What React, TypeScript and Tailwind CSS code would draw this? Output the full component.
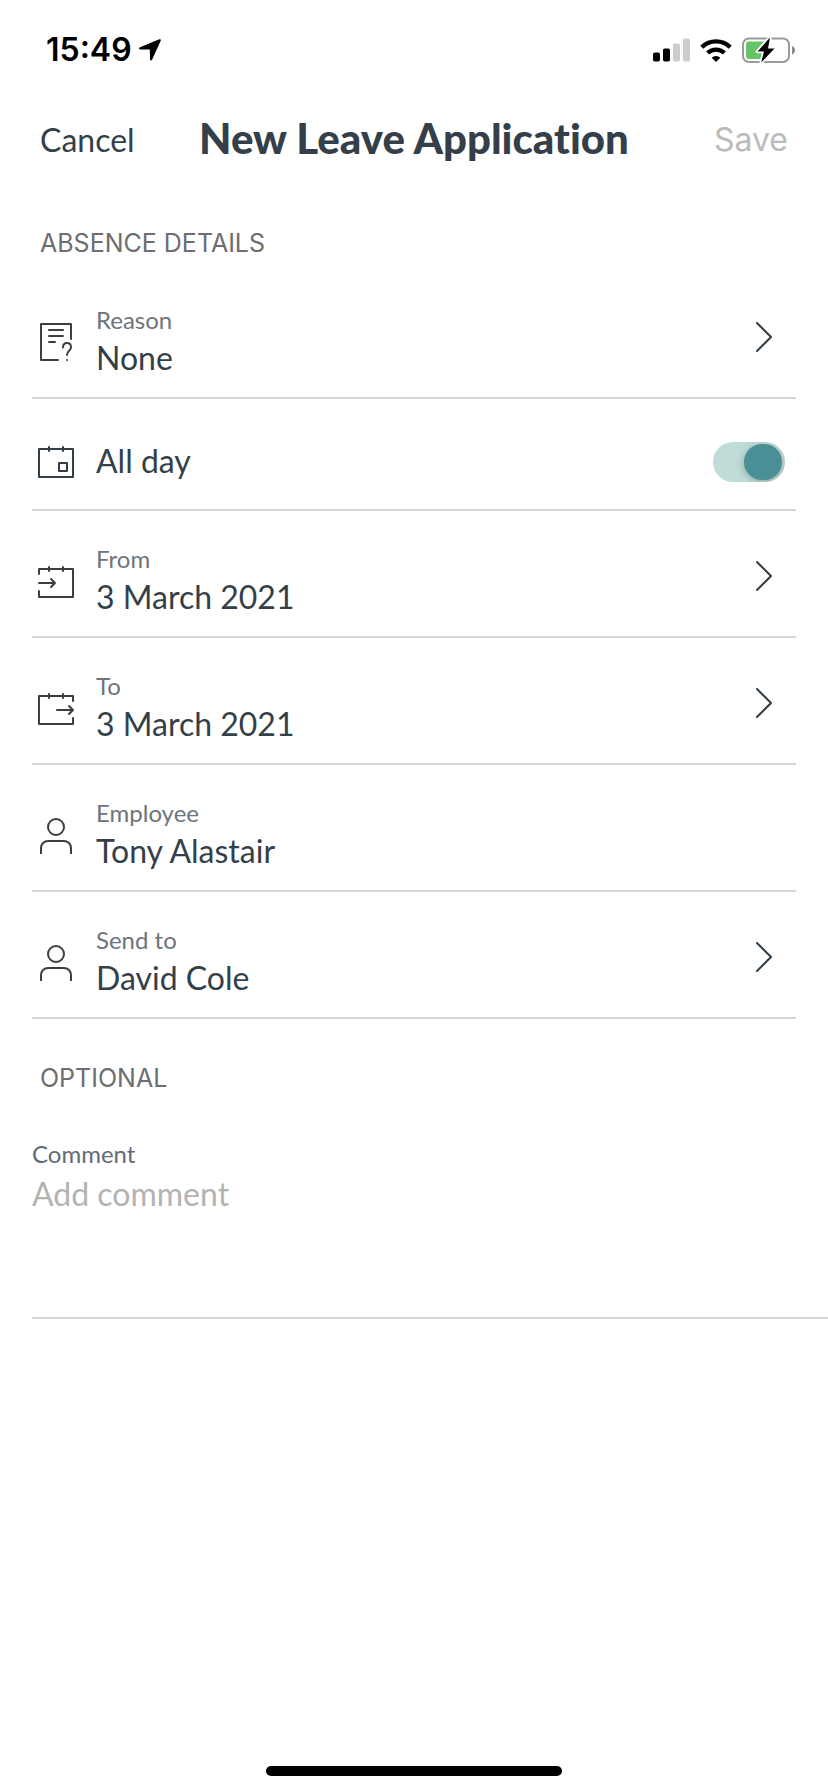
import { useState } from "react";
import type { ReactNode } from "react";

const iconProps = {
  viewBox: "0 0 48 48",
  fill: "none",
  stroke: "currentColor",
  strokeWidth: 2,
  strokeLinecap: "round" as const,
  strokeLinejoin: "round" as const,
  "aria-hidden": true,
};

function ReasonIcon() {
  return (
    <svg {...iconProps} className="size-12 shrink-0 text-[#3f3e3a]">
      <path d="M39 20V5H9v36h17M17 11h14M17 17h14M17 23h6" />
      <path d="M31 28.500c0-3 1.700-4.500 4-4.500s4 1.600 4 4.200c0 3.600-4 3.600-4 7.800" />
      <path d="M35 41v.1" />
    </svg>
  );
}

function AllDayIcon() {
  return (
    <svg {...iconProps} className="size-12 shrink-0 text-[#323d48]">
      <path d="M7 11h34v28H7zM17 9v4M31 9v4M27 25h8v8h-8z" />
    </svg>
  );
}

function FromIcon() {
  return (
    <svg {...iconProps} className="size-12 shrink-0 text-[#3f3e3a]">
      <path d="M7 16v-5h34v28H7v-6M17 9v4M31 9v4" />
      <path d="M7 25h16M19 21l4 4-4 4" />
    </svg>
  );
}

function ToIcon() {
  return (
    <svg {...iconProps} className="size-12 shrink-0 text-[#3f3e3a]">
      <path d="M41 16v-5H7v28h34v-6M17 9v4M31 9v4" />
      <path d="M25 25h16M37 21l4 4-4 4" />
    </svg>
  );
}

function PersonIcon() {
  return (
    <svg {...iconProps} strokeLinecap="butt" className="size-12 shrink-0 text-[#3f3e3a]">
      <circle cx="24" cy="15" r="8" />
      <path d="M9 42v-6a7 7 0 0 1 7-7h16a7 7 0 0 1 7 7v6" />
    </svg>
  );
}

function Chevron() {
  return (
    <svg viewBox="0 0 16 30" fill="none" stroke="currentColor" strokeWidth="2" strokeLinecap="round" aria-hidden className="mr-6 mb-3 h-[30px] w-4 shrink-0 text-[#343f49]">
      <path d="M1 1l14 14L1 29" />
    </svg>
  );
}

function StatusBar() {
  return (
    <div className="flex h-[100px] items-center justify-between pr-[33px] pl-[46px] text-black">
      <div className="flex items-center gap-[7px]">
        <span className="font-[Inter,sans-serif] text-[32px] leading-10 font-semibold">15:49</span>
        <svg viewBox="0 0 22 22" fill="currentColor" aria-hidden className="size-[22px]">
          <path d="M20.300.300 1 8.200c-1.400.600-1.200 2.100.300 2.200l9.500.2.200 9.500c0 1.500 1.600 1.800 2.200.400L21.700 1.700C22.200.500 21.500-.200 20.300.300z" />
        </svg>
      </div>
      <div className="flex items-center gap-[10px]">
        <svg viewBox="0 0 37 24" aria-hidden className="h-6 w-[37px]">
          <rect x="0" y="14.500" width="7" height="9" rx="1.800" />
          <rect x="10" y="10.500" width="7" height="13" rx="1.800" />
          <rect x="20" y="5.500" width="7" height="18" rx="1.800" fill="#cccccc" />
          <rect x="30" y="0.500" width="7" height="23" rx="1.800" fill="#cccccc" />
        </svg>
        <svg viewBox="0 0 32 24" fill="none" stroke="currentColor" strokeWidth="4.400" aria-hidden className="h-6 w-8">
          <path d="M1.800 9.200a20.300 20.300 0 0 1 28.400 0" />
          <path d="M7.600 15a12.200 12.200 0 0 1 16.800 0" />
          <path d="M16 24l-4.300-4.300a6.200 6.200 0 0 1 8.600 0z" fill="currentColor" stroke="none" />
        </svg>
        <svg viewBox="0 0 53 26" aria-hidden className="h-[26px] w-[53px]">
          <rect x="1" y="1.500" width="46" height="23.500" rx="6" fill="none" stroke="#9a9a9a" strokeWidth="2" />
          <path d="M50 9v8.500c2-.8 3-2.300 3-4.250S52 9.800 50 9z" fill="#8a8a8a" />
          <rect x="4" y="4.500" width="20" height="17.500" rx="3" fill="#65c466" />
          <path d="M28 .500 15.500 14.500h6.500l-2.800 11L32.500 11.500H26z" fill="#000" stroke="#fff" strokeWidth="3.500" paintOrder="stroke" strokeLinejoin="round" />
        </svg>
      </div>
    </div>
  );
}

function SectionTitle({ children }: { children: ReactNode }) {
  return (
    <h2 className="px-10 font-[Inter,sans-serif] text-[25px] leading-8 text-[#6d6d72]">{children}</h2>
  );
}

type FieldProps = { icon: ReactNode; label: string; value: string; link?: boolean };

function Field({ icon, label, value, link = false }: FieldProps) {
  const content = (
    <>
      {icon}
      <span className="flex grow flex-col pb-0.5 pl-4">
        <span className="text-[24px] leading-8 text-[#6e747c]">{label}</span>
        <span className="text-[32px] leading-[44px]">{value}</span>
      </span>
      {link && <Chevron />}
    </>
  );
  const rowClass = "flex h-[127px] w-full items-center border-b-2 border-[#d3d7d7] pt-[17px] text-left";
  return link ? (
    <button type="button" className={rowClass}>{content}</button>
  ) : (
    <div className={rowClass}>{content}</div>
  );
}

export default function App() {
  const [allDay, setAllDay] = useState(true);
  const [comment, setComment] = useState("");

  return (
    <div className="flex min-h-screen flex-col bg-white font-[Lato,sans-serif] text-[#343f49]">
      <StatusBar />
      <header className="grid h-20 grid-cols-[1fr_auto_1fr] items-center px-10">
        <button type="button" className="justify-self-start text-[32px] leading-10">Cancel</button>
        <h1 className="pb-1 text-[42px] leading-[48px] font-black [font-variant-ligatures:none]">New Leave Application</h1>
        <button type="button" disabled className="justify-self-end font-[Inter,sans-serif] text-[32px] leading-10 text-[#bbbbbb]">Save</button>
      </header>
      <main>
        <section className="pt-[47px]">
          <SectionTitle>ABSENCE DETAILS</SectionTitle>
          <div className="px-8 pt-[13px]">
            <Field icon={<ReasonIcon />} label="Reason" value="None" link />
            <div className="flex h-[112px] items-center border-b-2 border-[#d3d7d7] pt-4 pr-[11px]">
              <AllDayIcon />
              <label htmlFor="all-day" className="grow pb-0.5 pl-4 text-[32px] leading-[44px]">All day</label>
              <input
                id="all-day"
                type="checkbox"
                role="switch"
                checked={allDay}
                onChange={(e) => setAllDay(e.target.checked)}
                className="flex h-10 w-[72px] shrink-0 appearance-none items-center overflow-hidden rounded-full bg-[#d9dcdc] px-[3px] before:h-9 before:w-[38px] before:rounded-full before:bg-white before:shadow-[0_2px_8px_rgba(0,0,0,0.25)] checked:justify-end checked:bg-[#c0dcd8] checked:before:bg-[#4a8f96]"
              />
            </div>
            <Field icon={<FromIcon />} label="From" value="3 March 2021" link />
            <Field icon={<ToIcon />} label="To" value="3 March 2021" link />
            <Field icon={<PersonIcon />} label="Employee" value="Tony Alastair" />
            <Field icon={<PersonIcon />} label="Send to" value="David Cole" link />
          </div>
        </section>
        <section className="pt-[43px]">
          <SectionTitle>OPTIONAL</SectionTitle>
          <div className="ml-8 flex flex-col border-b-2 border-[#d3d7d7] pt-11">
            <label htmlFor="comment" className="text-[24px] leading-8 text-[#5f6b78]">Comment</label>
            <textarea
              id="comment"
              value={comment}
              onChange={(e) => setComment(e.target.value)}
              placeholder="Add comment"
              className="h-[147px] w-full resize-none pt-0.5 text-[32px] leading-[44px] outline-none placeholder:text-[#b3b3b1]"
            />
          </div>
        </section>
      </main>
      <div className="mx-auto mt-auto mb-4 h-[10px] w-[296px] rounded-full bg-black" />
    </div>
  );
}
